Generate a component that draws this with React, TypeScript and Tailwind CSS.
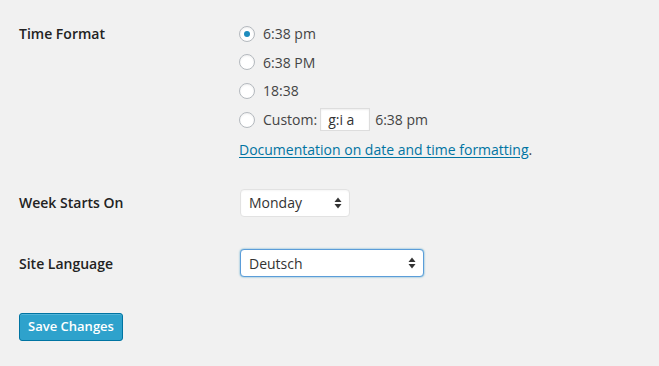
import React from "react";

const font = { fontFamily: '"Open Sans", "Liberation Sans", sans-serif' };

function Radio({ checked }: { checked?: boolean }) {
  return (
    <span className="w-[16px] h-[16px] rounded-full border border-[#b4b9be] bg-white shadow-[inset_0_1px_2px_rgba(0,0,0,0.07)] flex items-center justify-center shrink-0 mr-[8px]">
      {checked && <span className="w-[6px] h-[6px] rounded-full bg-[#1e8cbe]" />}
    </span>
  );
}

function Arrows() {
  return (
    <svg width="8" height="12" viewBox="0 0 8 12" className="shrink-0">
      <path d="M4 0.5 L7.5 5 L0.5 5 Z" fill="#333" />
      <path d="M4 11.5 L7.5 7 L0.5 7 Z" fill="#333" />
    </svg>
  );
}

function Select({ value, width, focus }: { value: string; width: string; focus?: boolean }) {
  return (
    <div
      className={`${width} ml-[1px] h-[28px] rounded-[4px] bg-white flex items-center justify-between pl-[8px] pr-[7px] text-[14px] text-[#333] ${
        focus
          ? "border border-[#5b9dd9] shadow-[0_0_2px_rgba(30,140,190,0.8)]"
          : "border border-[#e2e2e2] shadow-[inset_0_1px_2px_rgba(0,0,0,0.04)]"
      }`}
    >
      <span>{value}</span>
      <Arrows />
    </div>
  );
}

export default function App() {
  const options = ["6:38 pm", "6:38 PM", "18:38"];
  const heights = ["h-[29px]", "h-[28px]", "h-[29px]"];
  return (
    <div className="w-[659px] h-[366px] bg-[#f1f1f1] text-[#444] overflow-hidden" style={font}>
      <div className="pl-[19px] pt-[19px]">
        <div className="grid grid-cols-[220px_1fr]">
          <div className="h-[29px] flex items-center text-[14px] font-semibold text-[#222]">Time Format</div>
          <div className="flex flex-col text-[14px]">
            {options.map((o, i) => (
              <div key={o} className={`${heights[i]} flex items-center`}>
                <Radio checked={i === 0} />
                <span>{o}</span>
              </div>
            ))}
            <div className="h-[29px] flex items-center">
              <Radio />
              <span>Custom:</span>
              <span className="ml-[3px] w-[50px] h-[23px] bg-white border border-[#ddd] shadow-[inset_0_1px_2px_rgba(0,0,0,0.07)] flex items-center pl-[7px] text-[#333]">
                g:i a
              </span>
              <span className="ml-[5px]">6:38 pm</span>
            </div>
            <div className="mt-[5px] h-[20px] flex items-center text-[14px]">
              <a className="text-[#0074a2] underline underline-offset-[2px]">Documentation on date and time formatting</a>
              <span>.</span>
            </div>
          </div>
        </div>

        <div className="grid grid-cols-[220px_1fr] mt-[30px]">
          <div className="h-[27px] flex items-center text-[14px] font-semibold text-[#222]">Week Starts On</div>
          <div className="h-[27px] flex items-center">
            <Select value="Monday" width="w-[110px]" />
          </div>
        </div>

        <div className="grid grid-cols-[220px_1fr] mt-[33px]">
          <div className="h-[28px] flex items-center text-[14px] font-semibold text-[#222]">Site Language</div>
          <div className="h-[28px] flex items-center">
            <Select value="Deutsch" width="w-[184px]" focus />
          </div>
        </div>

        <button className="mt-[36px] w-[104px] h-[28px] rounded-[3px] bg-[#2ea2cc] border border-[#0074a2] shadow-[inset_0_1px_0_rgba(120,200,230,0.5)] text-white text-[13px] font-semibold flex items-center justify-center">
          Save Changes
        </button>
      </div>
    </div>
  );
}
